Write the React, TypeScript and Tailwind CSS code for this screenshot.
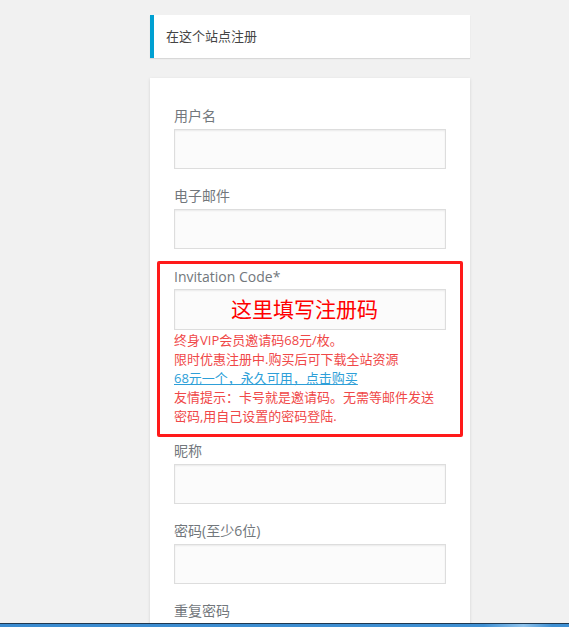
import React from "react";

const font = { fontFamily: '"Open Sans", "Noto Sans CJK SC", sans-serif' };

function Field({ label }: { label: string }) {
  return (
    <div className="mb-[16px]">
      <label className="block text-[14px] leading-[22px] text-[#72777c]">{label}</label>
      <div className="mt-[2px] h-[40px] w-full border border-[#dddddd] bg-[#fbfbfb] shadow-[inset_0_1px_2px_rgba(0,0,0,0.07)]" />
    </div>
  );
}

export default function App() {
  return (
    <div className="h-[627px] w-full bg-[#f1f1f1] overflow-hidden" style={font}>
      <div className="ml-[150px] w-[320px] pt-[15px]">
        <div className="border-l-4 border-[#00a0d2] bg-white px-[12px] py-[12px] text-[13px] leading-[19px] text-[#444444] shadow-[0_1px_1px_0_rgba(0,0,0,0.1)]">
          在这个站点注册
        </div>
        <div className="mt-[20px] bg-white px-[24px] pt-[27px] pb-[46px] shadow-[0_1px_3px_rgba(0,0,0,0.13)]">
          <Field label="用户名" />
          <Field label="电子邮件" />
          <div className="-mx-[17px] -mt-[4px] mb-[3px] rounded-[2px] border-[3px] border-[#ff1a1a] px-[14px] pt-[2px] pb-[8px]">
            <label className="block text-[14px] leading-[22px] text-[#72777c]">Invitation Code*</label>
            <div className="mt-[1px] flex h-[41px] w-full items-center justify-center border border-[#dddddd] bg-[#fbfbfb] pr-[11px] text-[21px] text-[#ff0000] shadow-[inset_0_1px_2px_rgba(0,0,0,0.07)]">
              这里填写注册码
            </div>
            <div className="mt-[1px] text-[13px] leading-[19px] text-[#f04848]">
              <div>终身VIP会员邀请码68元/枚。</div>
              <div>限时优惠注册中.购买后可下载全站资源</div>
              <div>
                <a className="text-[#2e9fd8] underline">68元一个，永久可用，点击购买</a>
              </div>
              <div>友情提示：卡号就是邀请码。无需等邮件发送密码,用自己设置的密码登陆.</div>
            </div>
          </div>
          <Field label="昵称" />
          <Field label="密码(至少6位)" />
          <Field label="重复密码" />
        </div>
      </div>
      <div className="fixed bottom-0 left-0 right-0 h-[4px] border-t border-[#1f3850] bg-[linear-gradient(90deg,#3a8bd0_0%,#3f90d3_85%,#8fc3ec_92%,#3f90d3_97%)]" />
    </div>
  );
}
